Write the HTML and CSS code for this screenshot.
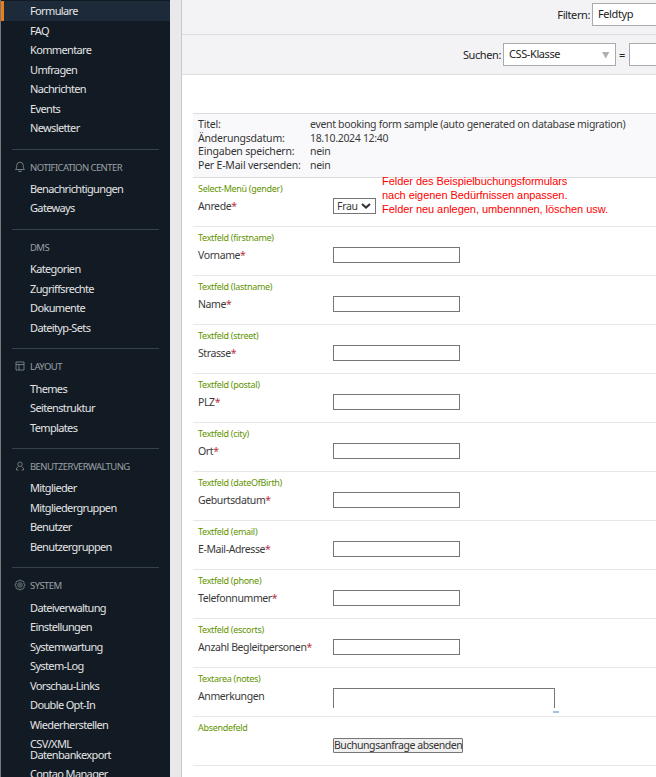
FILE: index.html
```html
<!DOCTYPE html>
<html lang="de">
<head>
<meta charset="utf-8">
<title>Formulare</title>
<link rel="stylesheet" href="styles.css">
</head>
<body>
<div class="app">
<nav class="sidebar">
  <ul><li class="active">Formulare</li><li>FAQ</li><li>Kommentare</li><li>Umfragen</li><li>Nachrichten</li><li>Events</li><li>Newsletter</li></ul>
  <h2><svg viewBox="0 0 12 12"><path d="M1.5 8.5c1.2-1 1.2-2 1.2-4a3.3 3.3 0 0 1 6.6 0c0 2 0 3 1.2 4zM4.8 9.5v1h2.4v-1"/></svg><span>NOTIFICATION CENTER</span></h2>
  <ul><li>Benachrichtigungen</li><li>Gateways</li></ul>
  <h2><span>DMS</span></h2>
  <ul><li>Kategorien</li><li>Zugriffsrechte</li><li>Dokumente</li><li>Dateityp-Sets</li></ul>
  <h2><svg viewBox="0 0 12 12"><path d="M2 2h8v8H2zM2 4.5h8M5 4.5V10"/></svg><span>LAYOUT</span></h2>
  <ul><li>Themes</li><li>Seitenstruktur</li><li>Templates</li></ul>
  <h2><svg viewBox="0 0 12 12"><circle cx="6" cy="4.2" r="2.2"/><path d="M4.500 6.500L2.500 8.200V10H4.500M7.500 6.500L9.500 8.200V10H7.500"/></svg><span>BENUTZERVERWALTUNG</span></h2>
  <ul><li>Mitglieder</li><li>Mitgliedergruppen</li><li>Benutzer</li><li>Benutzergruppen</li></ul>
  <h2><svg viewBox="0 0 12 12"><path d="M5 1.2h2l.5 1 1.3-.3 1.3 1.4-.4 1.2 1.1.7v1.6l-1.1.7.4 1.2-1.3 1.4-1.3-.3-.5 1H5l-.5-1-1.3.3-1.3-1.4.4-1.2-1.1-.7V5.2l1.1-.7-.4-1.2 1.3-1.4 1.3.3z"/><circle cx="6" cy="6" r="2.2"/><circle cx="6" cy="6" r=".5"/></svg><span>SYSTEM</span></h2>
  <ul><li>Dateiverwaltung</li><li>Einstellungen</li><li>Systemwartung</li><li>System-Log</li><li>Vorschau-Links</li><li>Double Opt-In</li><li>Wiederherstellen</li><li class="double">CSV/XML<br>Datenbankexport</li><li>Contao Manager</li></ul>
</nav>
<main class="main">
  <div class="bar filter"><b>Filtern:</b><span class="box">Feldtyp</span></div>
  <div class="bar search"><b>Suchen:</b><span class="box select">CSS-Klasse<svg viewBox="0 0 8 7"><path d="M0 0h7.4L3.7 6.4z"/></svg></span><i>=</i><span class="box"></span></div>
  <div class="content">
    <dl class="info">
      <dt>Titel:</dt><dd class="title">event booking form sample (auto generated on database migration)</dd>
      <dt>Änderungsdatum:</dt><dd>18.10.2024 12:40</dd>
      <dt>Eingaben speichern:</dt><dd>nein</dd>
      <dt>Per E-Mail versenden:</dt><dd>nein</dd>
    </dl>
    <section class="row"><h3>Select-Menü (gender)</h3><div class="field"><label>Anrede<em>*</em></label><span class="dropdown">Frau<svg viewBox="0 0 10 6"><path d="M1 1l4 3.6L9 1"/></svg></span></div>
      <p class="note">Felder des Beispielbuchungsformulars<br>nach eigenen Bedürfnissen anpassen.<br>Felder neu anlegen, umbennnen, löschen usw.</p></section>
    <section class="row"><h3>Textfeld (firstname)</h3><div class="field"><label>Vorname<em>*</em></label><input></div></section>
    <section class="row"><h3>Textfeld (lastname)</h3><div class="field"><label>Name<em>*</em></label><input></div></section>
    <section class="row"><h3>Textfeld (street)</h3><div class="field"><label>Strasse<em>*</em></label><input></div></section>
    <section class="row"><h3>Textfeld (postal)</h3><div class="field"><label>PLZ<em>*</em></label><input></div></section>
    <section class="row"><h3>Textfeld (city)</h3><div class="field"><label>Ort<em>*</em></label><input></div></section>
    <section class="row"><h3>Textfeld (dateOfBirth)</h3><div class="field"><label>Geburtsdatum<em>*</em></label><input></div></section>
    <section class="row"><h3>Textfeld (email)</h3><div class="field"><label>E-Mail-Adresse<em>*</em></label><input></div></section>
    <section class="row"><h3>Textfeld (phone)</h3><div class="field"><label>Telefonnummer<em>*</em></label><input></div></section>
    <section class="row"><h3>Textfeld (escorts)</h3><div class="field"><label>Anzahl Begleitpersonen<em>*</em></label><input></div></section>
    <section class="row"><h3>Textarea (notes)</h3><div class="field"><label>Anmerkungen</label><span class="area"></span><span class="grip"></span></div></section>
    <section class="row"><h3>Absendefeld</h3><div class="field"><label></label><button>Buchungsanfrage absenden</button></div></section>
  </div>
</main>
</div>
</body>
</html>
```
FILE: styles.css
```css
* { box-sizing: border-box; }
body { margin: 0; font: 10.5px/14px "Noto Sans", "Open Sans", sans-serif; color: #3a3a3a; background: #e9e9eb; overflow: hidden; }
.app { display: flex; height: 777px; overflow: hidden; }
.sidebar { width: 170px; flex: none; padding-top: 1px; border-left: 1px solid #777; background: #121b24; color: #e4e4e4; font-size: 11px; letter-spacing: -0.64px; overflow: hidden; }
ul { list-style: none; margin: 0; padding: 0; }
li { height: 19.5px; line-height: 19.5px; padding-left: 29px; white-space: nowrap; }
li.active { background: #1c2a39; border-left: 3px solid #ea7d16; padding-left: 26px; }
li.double { height: 30px; line-height: 11px; padding-top: 4px; }
h2 { height: 30.35px; margin: 11px 11px 0; padding: 8px 0 0 3px; border-top: 1px solid #36414b; display: flex; font-size: 9.5px; line-height: 20px; font-weight: 400; color: #9aa0a3; letter-spacing: -0.58px; }
h2 svg { width: 12px; height: 12px; margin-top: 3px; margin-left: -1px; margin-right: -11px; fill: none; stroke: #7c8388; stroke-width: .9; }
h2 span { margin-left: 15px; white-space: nowrap; }
.main { flex: none; width: 475px; margin-left: 11px; background: #fff; border-left: 1px solid #c8c8ca; overflow: hidden; letter-spacing: -0.32px; }
.bar { display: flex; align-items: flex-start; background: #f3f3f5; border-bottom: 1px solid #dddddf; color: #222; font-size: 11px; letter-spacing: -0.4px; overflow: hidden; }
.bar b { flex: none; font-weight: 400; line-height: 23px; text-align: right; }
.filter { height: 35px; padding-top: 3px; }
.filter b { width: 408px; margin-right: 1px; }
.search { height: 40px; padding-top: 8px; }
.search b { width: 319px; margin-right: 1px; }
.box { flex: none; width: 113px; height: 23px; margin-left: 1px; padding: 0 5px; border: 1px solid #aaa; background: #fff; line-height: 20px; display: flex; justify-content: space-between; align-items: flex-start; }
.box svg { width: 8px; height: 7px; margin-top: 8px; fill: #b0b0b2; }
.bar i { flex: none; width: 12px; font-style: normal; text-align: center; line-height: 23px; }
.content { margin: 38px 0 0 11px; }
.info { height: 65px; margin: 0; padding: 4px 5px 0; border-top: 1px solid #dddddf; border-bottom: 1px solid #dddddf; background: #f9f9fb; display: grid; grid-template-columns: 112px 1fr; grid-auto-rows: 13.6px; line-height: 13px; }
.info dt { white-space: nowrap; color: #333; letter-spacing: -0.2px; }
.info dd { margin: 0; white-space: nowrap; }
.row { position: relative; height: 49px; padding: 4px 0 0 5px; border-bottom: 1px solid #e7e7e9; }
h3 { margin: 0; height: 16px; font-size: 9px; line-height: 13px; font-weight: 400; color: #5f9400; letter-spacing: -0.31px; white-space: nowrap; }
.field { display: flex; align-items: flex-start; }
.field label { width: 135px; line-height: 17px; letter-spacing: -0.4px; white-space: nowrap; }
.field em { font-style: normal; color: #b8323f; }
input { width: 127px; height: 16px; margin: 0; padding: 0; border: 1px solid #767676; background: #fff; }
.dropdown { width: 43px; height: 16px; border: 1px solid #767676; padding: 0 4px 0 3px; display: flex; align-items: center; justify-content: space-between; }
.dropdown svg { width: 10px; height: 6px; fill: none; stroke: #333; stroke-width: 2; }
.note { position: absolute; left: 189px; top: -4px; margin: 0; font: 11px/14px "Liberation Sans", sans-serif; letter-spacing: -0.05px; color: #f00; white-space: nowrap; }
.area { width: 222px; height: 20px; border: 1px solid #767676; border-bottom: 0; }
.grip { width: 6px; height: 2px; margin: 23px 0 0 -2px; background: #a9bfda; }
button { width: 130px; height: 15px; margin-top: 1px; padding: 0; border: 1px solid #767676; border-radius: 1px; background: #efefef; color: #333; font: inherit; line-height: 11px; letter-spacing: -0.45px; white-space: nowrap; }
```
